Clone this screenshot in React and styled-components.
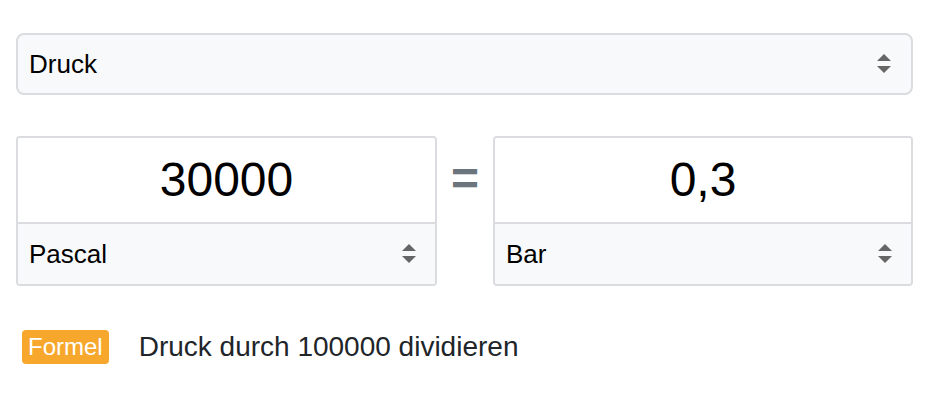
import React from "react";
import styled, { createGlobalStyle } from "styled-components";

const GlobalStyle = createGlobalStyle`
  html, body {
    margin: 0;
    padding: 0;
    background: #fff;
    font-family: "Liberation Sans", Arial, sans-serif;
  }
`;

const Page = styled.div`
  width: 897px;
  padding: 33px 0 0 16px;
  display: flex;
  flex-direction: column;
`;

const Select = styled.div`
  box-sizing: border-box;
  height: 62px;
  display: flex;
  align-items: center;
  justify-content: space-between;
  padding: 0 20px 0 11px;
  background: #f8f9fa;
  border: 2px solid #dadcdf;
  border-radius: 8px;
  font-size: 26px;
  color: #000;
`;

const Converter = styled.div`
  display: flex;
  align-items: stretch;
  margin-top: 41px;
`;

const UnitBox = styled.div`
  box-sizing: border-box;
  width: ${(p) => p.$width}px;
  display: flex;
  flex-direction: column;
  border: 2px solid #dadcdf;
  border-radius: 4px;
  overflow: hidden;
`;

const ValueInput = styled.input`
  box-sizing: border-box;
  height: 86px;
  width: 100%;
  border: none;
  border-bottom: 2px solid #dadcdf;
  outline: none;
  background: #fff;
  text-align: center;
  font-family: "Liberation Sans", Arial, sans-serif;
  font-size: 48px;
  color: #000;
  padding: 0 0 2px;
`;

const UnitSelect = styled(Select)`
  border: none;
  border-radius: 0;
  height: 60px;
  padding: 0 19px 0 11px;
`;

const Equals = styled.div`
  width: 56px;
  display: flex;
  justify-content: center;
  padding-top: 19px;
  font-size: 48px;
  font-weight: 700;
  color: #6c757d;
  line-height: 1;
`;

const FormulaRow = styled.div`
  display: flex;
  align-items: center;
  margin-top: 44px;
  padding-left: 6px;
`;

const Badge = styled.span`
  box-sizing: border-box;
  height: 34px;
  padding: 0 6px;
  display: inline-flex;
  align-items: center;
  background: #f7a82c;
  color: #fff;
  border-radius: 4px;
  font-size: 24px;
`;

const FormulaText = styled.span`
  margin-left: 30px;
  font-size: 28px;
  color: #212529;
`;

const Arrows = () => (
  <svg width="14" height="20" viewBox="0 0 14 20">
    <path d="M7 0 L14 7 L0 7 Z" fill="#666" />
    <path d="M0 12 L14 12 L7 19 Z" fill="#666" />
  </svg>
);

export default function App() {
  return (
    <>
      <GlobalStyle />
      <Page>
        <Select>
          <span>Druck</span>
          <Arrows />
        </Select>
        <Converter>
          <UnitBox $width={421}>
            <ValueInput readOnly value="30000" />
            <UnitSelect>
              <span>Pascal</span>
              <Arrows />
            </UnitSelect>
          </UnitBox>
          <Equals>=</Equals>
          <UnitBox $width={420}>
            <ValueInput readOnly value="0,3" />
            <UnitSelect>
              <span>Bar</span>
              <Arrows />
            </UnitSelect>
          </UnitBox>
        </Converter>
        <FormulaRow>
          <Badge>Formel</Badge>
          <FormulaText>Druck durch 100000 dividieren</FormulaText>
        </FormulaRow>
      </Page>
    </>
  );
}
